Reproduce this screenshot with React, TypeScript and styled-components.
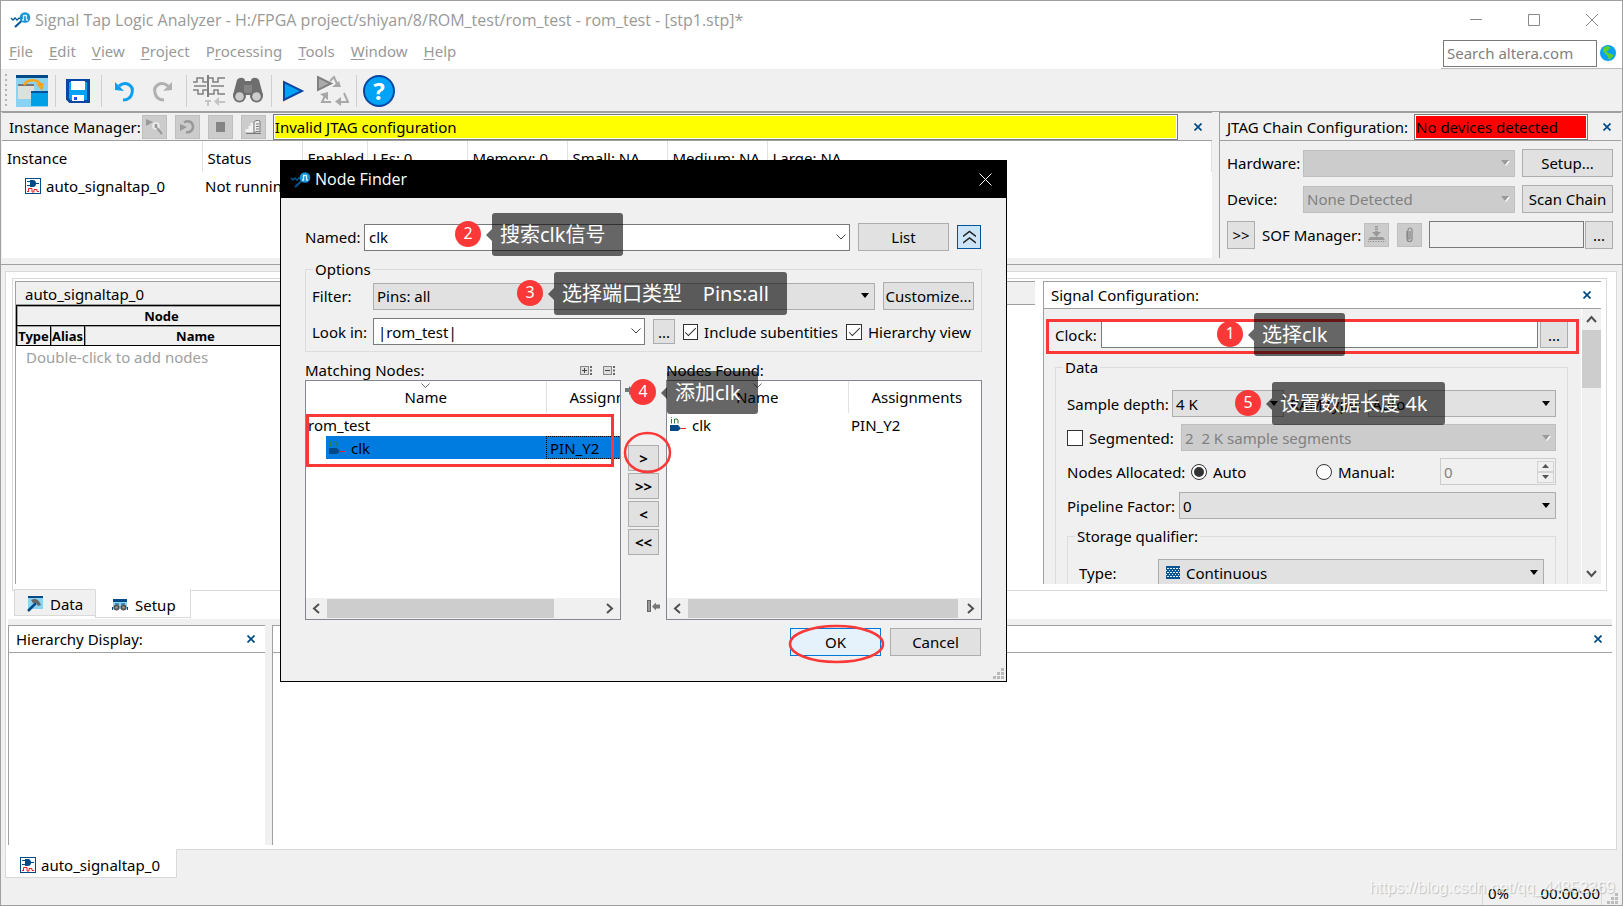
import React from "react";
import styled, { createGlobalStyle, css } from "styled-components";

const GlobalStyle = createGlobalStyle`
  *, *::before, *::after { box-sizing: border-box; }
  body { margin: 0; background: #a0a0a0; }
  body, button, input, select, table {
    font-family: "Noto Sans", "Noto Sans CJK SC", sans-serif;
    font-size: 15px;
    line-height: 20px;
    color: #000;
  }
  button, input, select { margin: 0; border-radius: 0; }
  svg { display: block; flex: none; }
`;

const FACE = "#f0f0f0";
const LINE = "#a0a0a0";
const SOFT = "#d9d9d9";

/* ---------- window frame ---------- */

const Frame = styled.div`
  position: relative;
  display: flex;
  flex-direction: column;
  min-height: 100vh;
  background: ${FACE};
  border: 1px solid ${LINE};
  overflow: hidden;
`;

const Heading = styled.header`
  display: flex;
  flex-direction: column;
  background: #fff;
  border-bottom: 1px solid #ececec;
`;

const TitleBar = styled.div`
  display: flex;
  align-items: center;
  height: 37px;
  padding: 0 18px 0 9px;
  gap: 3px;
`;

const WindowTitle = styled.h1`
  flex: 1;
  margin: 0;
  font-family: "Open Sans", sans-serif;
  font-size: 16px;
  font-weight: 400;
  line-height: 24px;
  white-space: nowrap;
  color: #999;
`;

const CaptionButtons = styled.div`
  display: flex;
  gap: 34px;
`;

const GlyphButton = styled.button`
  display: flex;
  align-items: center;
  justify-content: center;
  width: 24px;
  height: 24px;
  padding: 0;
  border: 0;
  background: none;
`;

const MenuRow = styled.div`
  display: flex;
  justify-content: space-between;
  height: 31px;
  padding-left: 8px;
`;

const Menu = styled.nav`
  display: flex;
  gap: 16px;
  height: 26px;
  align-items: center;
  a { color: #999; text-decoration: none; }
  u { text-underline-offset: 2px; }
`;

const SearchBox = styled.div`
  display: flex;
  align-items: center;
  gap: 3px;
  padding: 0 6px 0 2px;
  border-bottom: 1px solid #bdbdbd;
`;

const TextField = styled.input<{ $grow?: boolean; $w?: number }>`
  height: 27px;
  padding: 0 3px;
  border: 1px solid #7a7a7a;
  background: #fff;
  outline: 0;
  min-width: 0;
  ${(p) => p.$grow && css`flex: 1;`}
  ${(p) => p.$w && css`width: ${p.$w}px;`}
  &::placeholder { color: #808080; opacity: 1; }
  &:disabled { background: ${FACE}; }
`;

const Toolbar = styled.div`
  display: flex;
  align-items: center;
  height: 41px;
  margin-top: 1px;
  padding-left: 4px;
  border-bottom: 1px solid ${LINE};
`;

const Grip = styled.span`
  width: 2px;
  height: 34px;
  margin-right: 9px;
  background: repeating-linear-gradient(#b4b4b4 0 2px, transparent 2px 5px);
`;

const Tool = styled.button`
  width: 32px;
  height: 32px;
  padding: 0;
  border: 0;
  background: none;
  & + & { margin-left: 7px; }
`;

const Divider = styled.span`
  width: 1px;
  height: 32px;
  margin: 0 6px 0 7px;
  background: #cfcfcf;
`;

/* ---------- shared controls ---------- */

const PanelHeader = styled.div<{ $white?: boolean; $tall?: boolean }>`
  display: flex;
  align-items: center;
  height: ${(p) => (p.$tall ? 29 : 28)}px;
  padding: 0 2px 0 7px;
  border: solid ${LINE};
  border-width: 1px 0;
  background: ${(p) => (p.$white ? "#fff" : FACE)};
  white-space: nowrap;
`;

const PanelTitle = styled.span`
  margin-right: auto;
`;

const HeaderLabel = styled.span<{ $gap: number }>`
  margin-right: ${(p) => p.$gap}px;
`;

const Message = styled.output<{ $fill: string; $w?: number }>`
  ${(p) => (p.$w ? css`width: ${p.$w}px;` : css`flex: 1;`)}
  height: 26px;
  padding: 2px 0 0 1px;
  border: 1px solid #7a7a7a;
  background: ${(p) => p.$fill};
  box-shadow: inset 0 0 0 1px #fff;
`;

const MiniButton = styled.button`
  display: flex;
  align-items: center;
  justify-content: center;
  width: 25px;
  height: 24px;
  padding: 0;
  border: 1px solid #bfbfbf;
  background: #ccc;
`;

const MiniGroup = styled.div`
  display: flex;
  gap: 8px;
  margin-right: 7px;
`;

const Button = styled.button<{ $w?: number; $h?: number; $primary?: boolean }>`
  flex: none;
  display: flex;
  align-items: center;
  justify-content: center;
  width: ${(p) => p.$w ?? 91}px;
  height: ${(p) => p.$h ?? 28}px;
  padding: 0;
  border: 1px solid ${(p) => (p.$primary ? "#0078d7" : "#adadad")};
  background: ${(p) => (p.$primary ? "#e5f1fb" : "#e1e1e1")};
  white-space: nowrap;
`;

const SelectWrap = styled.span<{ $w?: number }>`
  display: grid;
  align-items: center;
  min-width: 0;
  ${(p) => (p.$w ? css`width: ${p.$w}px;` : css`flex: 1;`)}
  > * { grid-area: 1 / 1; }
  > svg { justify-self: end; margin-right: 5px; pointer-events: none; }
`;

const NativeSelect = styled.select<{ $pad?: number }>`
  appearance: none;
  width: 100%;
  height: 27px;
  padding: 0 20px 0 ${(p) => p.$pad ?? 3}px;
  border: 1px solid #adadad;
  background: #e1e1e1;
  opacity: 1;
  &:disabled { border-color: #bfbfbf; background: #ccc; color: #808080; }
`;

const LeadIcon = styled.span`
  margin-left: 8px;
  pointer-events: none;
`;

function Select(p: { id: string; value: string; w?: number; pad?: number; disabled?: boolean; icon?: React.ReactNode }) {
  return (
    <SelectWrap $w={p.w}>
      <NativeSelect id={p.id} disabled={p.disabled} $pad={p.pad} defaultValue={p.value}>
        <option>{p.value}</option>
      </NativeSelect>
      {p.icon && <LeadIcon>{p.icon}</LeadIcon>}
      <svg width="9" height="6" viewBox="0 0 9 6">
        {p.disabled && <path d="M1 1h8L5 6z" fill="#fff" />}
        <path d="M0 0h8L4 5z" fill={p.disabled ? "#999" : "#000"} />
      </svg>
    </SelectWrap>
  );
}

const ComboShell = styled.div<{ $w?: number }>`
  display: flex;
  ${(p) => (p.$w ? css`width: ${p.$w}px;` : css`flex: 1;`)}
  height: 27px;
  border: 1px solid #7a7a7a;
  background: #fff;
  input { flex: 1; min-width: 0; border: 0; outline: 0; padding: 0 4px; background: none; }
  button { width: 17px; }
`;

function Combo({ id, value, w }: { id: string; value: string; w?: number }) {
  return (
    <ComboShell $w={w}>
      <input id={id} defaultValue={value} />
      <GlyphButton type="button" aria-label="Open list">
        <svg width="10" height="6" viewBox="0 0 10 6"><path d="M.5.5 5 5 9.500.5" fill="none" stroke="#444" /></svg>
      </GlyphButton>
    </ComboShell>
  );
}

const CheckLabel = styled.label<{ $w?: number }>`
  display: flex;
  align-items: center;
  gap: 6px;
  ${(p) => p.$w && css`width: ${p.$w}px;`}
  white-space: nowrap;
`;

const Check = styled.input`
  appearance: none;
  display: grid;
  place-items: center;
  width: 16px;
  height: 16px;
  border: 1px solid #333;
  background: #fff;
  &:checked::after {
    content: "";
    width: 11px;
    height: 5px;
    margin-top: -3px;
    border: solid #333;
    border-width: 0 0 1px 1px;
    transform: rotate(-45deg);
  }
`;

const Radio = styled(Check)`
  border-radius: 50%;
  &:checked::after {
    width: 10px;
    height: 10px;
    margin: 0;
    border: 0;
    border-radius: 50%;
    background: #333;
  }
`;

const Group = styled.fieldset<{ $pad: string; $gap: number; $legend?: number }>`
  min-width: 0;
  margin: 0;
  padding: ${(p) => p.$pad};
  border: 1px solid #dcdcdc;
  legend { height: 20px; margin-left: ${(p) => p.$legend ?? -4}px; padding: 0 2px; }
  > div + div { margin-top: ${(p) => p.$gap}px; }
`;

const Row = styled.div<{ $gap: number }>`
  display: flex;
  align-items: center;
  gap: ${(p) => p.$gap}px;
`;

const FieldLabel = styled.label<{ $w?: number }>`
  flex: none;
  ${(p) => p.$w && css`width: ${p.$w}px;`}
  white-space: nowrap;
`;

function CloseGlyph() {
  return (
    <GlyphButton type="button" aria-label="Close">
      <svg width="8" height="8" viewBox="0 0 8 8"><path d="M.5.5l7 7M7.500.5l-7 7" stroke="#004b87" strokeWidth="1.700" /></svg>
    </GlyphButton>
  );
}

/* ---------- upper docks ---------- */

const UpperDocks = styled.div`
  display: grid;
  grid-template-columns: 1fr 402px;
  column-gap: 7px;
  padding: 0 1px 6px;
  border-bottom: 1px solid ${LINE};
`;

const InstanceDock = styled.section`
  min-width: 0;
  background: #fff;
  height: 146px;
`;

const InstanceTable = styled.table`
  width: 100%;
  table-layout: fixed;
  border-collapse: collapse;
  white-space: nowrap;
  th {
    height: 31px;
    padding: 2px 0 0 5px;
    border-right: 1px solid #e2e2e2;
    font-weight: 400;
    text-align: left;
  }
  td { height: 27px; padding: 0 0 0 3px; }
`;

const InstanceCell = styled.span`
  display: flex;
  align-items: center;
  gap: 5px;
  padding-left: 20px;
`;

const InstanceClose = styled.span`
  margin-left: 8px;
`;

const JtagDock = styled.section`
  border-left: 1px solid ${LINE};
`;

const JtagClose = styled.span`
  margin-left: auto;
`;

const JtagBody = styled.div`
  display: flex;
  flex-direction: column;
  gap: 8px;
  padding: 8px 8px 0 7px;
`;

const SofPath = styled.div`
  flex: 1;
  display: flex;
  gap: 1px;
  min-width: 0;
  margin-left: -7px;
`;

/* ---------- workspace ---------- */

const Workspace = styled.main`
  flex: 1;
  display: flex;
  flex-direction: column;
  margin: 6px 5px 0 4px;
  padding: 6px 4px 4px 2px;
  border: 1px solid ${SOFT};
  background: #fff;
`;

const SetupPane = styled.section`
  display: grid;
  grid-template-columns: 1fr 558px;
  column-gap: 8px;
  height: 313px;
  margin: 0 5px 0 4px;
  padding: 2px 5px 6px 2px;
  border: 1px solid ${SOFT};
`;

const Editor = styled.div`
  border: solid ${LINE};
  border-width: 1px 0 0 1px;
`;

const EditorTitle = styled.div`
  height: 23px;
  padding: 2px 0 0 9px;
  border-bottom: 1px solid ${LINE};
  background: ${FACE};
`;

const NodeTable = styled.table`
  width: 291px;
  border-collapse: collapse;
  table-layout: fixed;
  th {
    height: 20px;
    padding: 2px 0 0;
    border: 1px solid #000;
    background: ${FACE};
    box-shadow: inset 1px 1px 0 #a0a0a0;
    line-height: 17px;
    font-size: 13px;
    font-weight: 700;
  }
`;

const Hint = styled.p`
  margin: 1px 0 0 10px;
  color: #a0a0a0;
`;

const ConfigDock = styled.section`
  position: relative;
  display: flex;
  flex-direction: column;
  min-height: 0;
  border-left: 1px solid ${LINE};
`;

const ConfigScroll = styled.div`
  flex: 1;
  min-height: 0;
  display: flex;
  background: ${FACE};
`;

const ConfigBody = styled.div`
  flex: 1;
  overflow: hidden;
  padding: 12px 13px 0 11px;
`;

const ConfigGroupGap = styled.div`
  margin-top: 9px;
`;

const VScroll = styled.div`
  display: flex;
  flex-direction: column;
  align-items: center;
  width: 20px;
  border-left: 1px solid #fff;
  > span { width: 19px; height: 58px; margin-bottom: auto; background: #cdcdcd; }
  button { width: 20px; height: 21px; }
`;

const Spin = styled.div`
  display: flex;
  align-items: center;
  width: 116px;
  height: 27px;
  margin-left: auto;
  border: 1px solid #ccc;
  input { flex: 1; min-width: 0; padding: 0 3px; border: 0; background: none; color: #808080; }
`;

const SpinButtons = styled.span`
  display: flex;
  flex-direction: column;
  margin-right: 1px;
  button { width: 17px; height: 11px; border: 1px solid #d4d4d4; }
`;

const PaneTabs = styled.div`
  display: flex;
  align-items: flex-start;
  margin: -2px 0 0 6px;
  height: 30px;
`;

const PaneTab = styled.button<{ $active?: boolean }>`
  display: flex;
  align-items: center;
  gap: 7px;
  width: ${(p) => (p.$active ? 96 : 82)}px;
  height: ${(p) => (p.$active ? 29 : 27)}px;
  padding: 2px 0 0 ${(p) => (p.$active ? 16 : 12)}px;
  border: 1px solid ${SOFT};
  border-top-color: ${(p) => (p.$active ? "#fff" : SOFT)};
  margin-right: -1px;
  background: ${(p) => (p.$active ? "#fff" : FACE)};
`;

const LowerDocks = styled.div`
  flex: 1;
  display: grid;
  grid-template-columns: 257px 1fr;
  border-top: 6px solid ${FACE};
`;

const LowerDock = styled.section`
  border-left: 1px solid ${LINE};
  & + & { box-shadow: -7px 0 0 ${FACE}; margin-left: 7px; }
`;

const FileTabs = styled.div`
  display: flex;
  margin: -1px 0 0 4px;
`;

const FileTab = styled.button`
  display: flex;
  align-items: center;
  gap: 5px;
  width: 172px;
  height: 29px;
  padding: 2px 0 0 14px;
  border: 1px solid ${SOFT};
  border-top-color: #fff;
  background: #fff;
`;

const StatusBar = styled.footer`
  display: flex;
  justify-content: flex-end;
  align-items: flex-end;
  height: 27px;
  padding-right: 4px;
`;

const StatusCells = styled.div`
  display: flex;
  width: 120px;
  height: 22px;
  justify-content: space-between;
  margin-right: 5px;
  padding: 0 1px 0 5px;
  border: solid #d9d9d9;
  border-width: 0 1px;
`;

const StatusGrip = styled.div`
  padding-bottom: 1px;
`;

const Watermark = styled.span`
  position: absolute;
  right: 7px;
  bottom: 5px;
  font-family: "Liberation Sans", Arial, sans-serif;
  font-size: 16px;
  line-height: 24px;
  color: rgba(255, 255, 255, 0.75);
  text-shadow: 1px 1px 1px rgba(0, 0, 0, 0.2);
`;

/* ---------- node finder dialog ---------- */

const Dialog = styled.div`
  position: absolute;
  left: 279px;
  top: 159px;
  width: 727px;
  border: 1px solid #000;
  background: ${FACE};
`;

const DialogTitle = styled.div`
  display: flex;
  align-items: center;
  gap: 3px;
  height: 37px;
  padding: 0 9px;
  background: #000;
  h2 {
    flex: 1;
    margin: 0;
    padding-bottom: 1px;
    font-family: "Open Sans", sans-serif;
    font-size: 16px;
    font-weight: 400;
    color: #fff;
  }
`;

const DialogBody = styled.form`
  display: flex;
  flex-direction: column;
  gap: 8px;
  padding: 25px 24px 25px 24px;
`;

const NamedRow = styled(Row)`
  padding-right: 1px;
`;

const ToggleButton = styled.button`
  display: flex;
  align-items: center;
  justify-content: center;
  width: 24px;
  height: 24px;
  padding: 0;
  border: 1px solid #005499;
  background: #cce4f7;
`;

const Lists = styled.div`
  display: grid;
  grid-template-columns: 316px 45px 1fr;
`;

const ListColumn = styled.div`
  display: flex;
  flex-direction: column;
  min-width: 0;
`;

const ListCaption = styled.div`
  display: flex;
  align-items: center;
  gap: 11px;
  height: 20px;
  padding-right: 6px;
  > span { flex: 1; }
`;

const ListBox = styled.div`
  display: flex;
  flex-direction: column;
  height: 240px;
  border: 1px solid #828790;
  background: #fff;
  overflow: hidden;
`;

const ListArea = styled.div`
  flex: 1;
  overflow: hidden;
`;

const NodesTable = styled.table<{ $name: number }>`
  width: ${(p) => p.$name + 137}px;
  table-layout: fixed;
  border-collapse: collapse;
  th {
    height: 32px;
    padding: 0;
    font-weight: 400;
    vertical-align: top;
  }
  th > svg { margin: 2px auto 0; }
  th > span { display: block; margin-top: -1px; }
  th:last-child > span { margin-top: 6px; }
  th:first-child { width: ${(p) => p.$name}px; border-right: 1px solid #e2e2e2; }
  td { height: 23px; padding: 0 0 0 2px; }
`;

const NodeCell = styled.span<{ $selected?: boolean; $indent?: number }>`
  display: flex;
  align-items: center;
  gap: 6px;
  height: 23px;
  margin-left: ${(p) => p.$indent ?? 0}px;
  padding: 0 3px;
  background: ${(p) => (p.$selected ? "#007be0" : "none")};
  svg { margin-top: -2px; }
`;

const PinCell = styled.span<{ $selected?: boolean }>`
  display: flex;
  align-items: center;
  height: 23px;
  margin-left: -2px;
  padding-left: 3px;
  ${(p) => p.$selected && css`background: #007be0; border: 1px dotted #000;`}
`;

const HScroll = styled.div<{ $thumb: number }>`
  display: flex;
  align-items: center;
  height: 21px;
  padding-bottom: 1px;
  background: ${FACE};
  > span { width: ${(p) => p.$thumb}px; height: 19px; margin-right: auto; background: #cdcdcd; }
  button { width: 21px; }
`;

const Transfer = styled.div`
  display: flex;
  flex-direction: column;
  align-items: center;
  gap: 2px;
  padding: 24px 0 8px;
  button { font-weight: 700; }
  > svg:first-child { align-self: flex-start; margin: 0 0 47px 4px; }
  > svg:last-child { align-self: flex-end; margin: auto 6px 0 0; }
`;

const DialogActions = styled.div`
  display: flex;
  justify-content: flex-end;
  gap: 9px;
  padding-right: 1px;
`;

const DialogGrip = styled.div`
  position: absolute;
  right: 2px;
  bottom: 2px;
`;

/* ---------- annotations ---------- */

const Ring = styled.svg<{ $x: number; $y: number }>`
  position: absolute;
  left: ${(p) => p.$x}px;
  top: ${(p) => p.$y}px;
  pointer-events: none;
`;

const RedFrame = styled.div<{ $x: number; $y: number; $w: number; $h: number }>`
  position: absolute;
  left: ${(p) => p.$x}px;
  top: ${(p) => p.$y}px;
  width: ${(p) => p.$w}px;
  height: ${(p) => p.$h}px;
  border: 3px solid #fb3838;
  pointer-events: none;
`;

const Note = styled.div<{ $x: number; $y: number }>`
  position: absolute;
  left: ${(p) => p.$x}px;
  top: ${(p) => p.$y}px;
  display: flex;
  align-items: center;
  color: #fff;
  white-space: pre;
`;

const NoteNumber = styled.span`
  width: 26px;
  height: 26px;
  margin: 0 5px 1px 0;
  border-radius: 50%;
  background: #fb3838;
  font-size: 16px;
  line-height: 24px;
  text-align: center;
`;

const NoteArrow = styled.span`
  border: solid transparent;
  border-width: 6px 6px 6px 0;
  border-right-color: rgba(0, 0, 0, 0.6);
`;

const NoteText = styled.span`
  height: 43px;
  padding: 0 18px 0 8px;
  border-radius: 3px;
  background: rgba(0, 0, 0, 0.6);
  font-size: 20px;
  line-height: 44px;
`;

function Callout({ x, y, n, text }: { x: number; y: number; n: number; text: string }) {
  return (
    <Note $x={x} $y={y}>
      <NoteNumber>{n}</NoteNumber>
      <NoteArrow />
      <NoteText>{text}</NoteText>
    </Note>
  );
}

/* ---------- icons ---------- */

function TapIcon() {
  return (
    <svg width="22" height="16" viewBox="0 0 22 16">
      <path d="M1 6l2 2 2-2 2 2 2-2 2 1" fill="none" stroke="#005a94" strokeWidth="1.300" />
      <path d="M11.500 9 5 15" stroke="#00568f" strokeWidth="2" />
      <circle cx="15" cy="5.500" r="5.300" fill="#1193d6" />
      <path d="M12 8h1.500V3.500h3V8H18" fill="none" stroke="#c8f0ff" strokeWidth="1.300" />
    </svg>
  );
}

function InstanceIcon() {
  return (
    <svg width="16" height="16" viewBox="0 0 16 16">
      <rect x=".5" y=".5" width="15" height="15" fill="#fff" stroke="#004b87" />
      <path d="M5 2h3c2 0 3 1.500 3 3.500S10 9 8 9H5z" fill="#004b87" />
      <path d="M2 3.500h3M2 7.500h3M11 5.500h3" stroke="#004b87" />
      <path d="M2 13.500h1.500M3.500 14v-3.500h3.500v3.500h2v-2.500h3v2H14" fill="none" stroke="#ee1c25" />
    </svg>
  );
}

function PinIcon() {
  return (
    <svg width="16" height="16" viewBox="0 0 16 16">
      <path d="M1.500 3v4.500M1.500 1v.8M4.500 7.500V3h2.500l1 1v3.500" fill="none" stroke="#2f7d32" />
      <path d="M0 9h8l3 3.500L8 15H0z" fill="#004b87" />
      <path d="M11 12.500h5" stroke="#ee1c25" />
    </svg>
  );
}

function SizeGrip() {
  const dots = [[8, 0], [4, 4], [8, 4], [0, 8], [4, 8], [8, 8]];
  return (
    <svg width="11" height="11" viewBox="0 0 11 11">
      {dots.map(([x, y]) => <rect key={`${x}-${y}`} x={x} y={y} width="3" height="3" fill="#bbb" />)}
    </svg>
  );
}

function Chevron({ dir }: { dir: "left" | "right" | "up" | "down" }) {
  const d = { left: "M8 1 3 5.500 8 10", right: "M3 1l5 4.500L3 10", up: "M1 8l4.500-5L10 8", down: "M1 3l4.500 5L10 3" }[dir];
  return <svg width="11" height="11" viewBox="0 0 11 11"><path d={d} fill="none" stroke="#505050" strokeWidth="2" /></svg>;
}

function SortMark() {
  return <svg width="9" height="5" viewBox="0 0 9 5"><path d="M.5.5l4 4 4-4" fill="none" stroke="#666" /></svg>;
}

function TreeMark({ plus }: { plus?: boolean }) {
  return (
    <svg width="12" height="9" viewBox="0 0 12 9">
      <rect x=".5" y=".5" width="8" height="8" fill="#ddd" stroke="#888" />
      <path d={plus ? "M2 4.500h5M4.500 2v5" : "M2 4.500h5"} stroke="#444" />
      <path d="M11 0v9" stroke="#666" strokeWidth="2" strokeDasharray="2 1.500" />
    </svg>
  );
}

function Triangle({ up }: { up?: boolean }) {
  return <svg width="7" height="4" viewBox="0 0 7 4"><path d={up ? "M0 4h7L3.500 0z" : "M0 0h7L3.500 4z"} fill="#555" /></svg>;
}

const toolSvg = { width: 32, height: 32, viewBox: "0 0 32 32" };

function OpenViewIcon() {
  return (
    <svg {...toolSvg}>
      <path d="M0 0h32v32H0z" fill="#8bd2f3" />
      <path d="M0 0h32v3H0z" fill="#004b87" />
      <path d="M2 10h16v14H2z" fill="#e0e0da" /><path d="M2 9h16v2H2z" fill="#777" />
      <path d="M15 17h17v14H15z" fill="#00a0e6" /><path d="M15 16h17v2H15z" fill="#00529b" />
      <path d="M8 10c3-6 15-7 17 1" fill="none" stroke="#f9a51a" strokeWidth="2.500" />
      <path d="M20 8.500l8-.500-2 8z" fill="#f9a51a" />
    </svg>
  );
}

function SaveIcon() {
  return (
    <svg {...toolSvg}>
      <path d="M5.500 5.500h21v21H8l-2.500-2.500z" fill="#00a3f5" stroke="#0a46a4" strokeWidth="3" />
      <path d="M9 6h14v9H9z" fill="#fff" />
      <path d="M10 20h12v6H10z" fill="#fff" /><path d="M12 22h3v3h-3z" fill="#2251e8" />
    </svg>
  );
}

function UndoIcon({ redo }: { redo?: boolean }) {
  const color = redo ? "#b0b0b0" : "#0aa0f0";
  return (
    <svg {...toolSvg}>
      <g transform={redo ? "translate(32 0) scale(-1 1)" : undefined}>
        <path d="M11 11c7-6 15 0 13 7-1 5-5 7-9 7" fill="none" stroke={color} strokeWidth="3" />
        <path d="M7 7v8l9 1z" fill={color} />
      </g>
    </svg>
  );
}

function WavesIcon() {
  return (
    <svg {...toolSvg}>
      <path d="M0 7h4V3h6v4h5V3h5v4h5V3h7M0 15h5v4h5v-4h5v4h6v-4h4v4h7M1 11h12m5 0h13" fill="none" stroke="#808080" strokeWidth="1.500" />
      <path d="M15 0v22" stroke="#808080" strokeWidth="2" />
      <path d="M12 26h6M15 26v5M24 27h8" stroke="#c4c4c4" strokeWidth="2" /><path d="M26 22v9l-5-4.500z" fill="#c4c4c4" />
    </svg>
  );
}

function BinocularIcon() {
  return (
    <svg {...toolSvg}>
      <path d="M5 5c2-3 8-3 8 1h6c0-4 6-4 8-1l4 15H1z" fill="#6e6e6e" />
      <path d="M12 10h8v8h-8z" fill="#858585" />
      <circle cx="7.500" cy="21" r="6.500" fill="#6e6e6e" /><circle cx="24.500" cy="21" r="6.500" fill="#6e6e6e" />
      <circle cx="7.500" cy="21.500" r="4.300" fill="#ccc" /><circle cx="24.500" cy="21.500" r="4.300" fill="#ccc" />
    </svg>
  );
}

function PlayIcon() {
  return <svg {...toolSvg}><path d="M6 7v18l18-9z" fill="#00a3f5" stroke="#0a46a4" strokeWidth="2" /></svg>;
}

function RecycleIcon() {
  return (
    <svg {...toolSvg}>
      <path d="M1 2v13l13-6.500z" fill="#aaa" stroke="#808080" strokeWidth="2" />
      <path d="M13 6l4-4 4 9M14 27H5l3-6M27 18l4 9H21" fill="none" stroke="#a8a8a8" strokeWidth="2" />
      <path d="M15 12h9l-2-6zM3 19l8-2v8zM24 22v9l-6-4.500z" fill="#a8a8a8" />
    </svg>
  );
}

const HelpBadge = styled.span`
  display: block;
  width: 32px;
  height: 32px;
  border: 2px solid #0a46a4;
  border-radius: 50%;
  background: #00a3f5;
  color: #fff;
  font-size: 24px;
  font-weight: 700;
  line-height: 28px;
  text-align: center;
`;

function GlobeIcon() {
  return (
    <svg width="16" height="16" viewBox="0 0 16 16">
      <circle cx="8" cy="8" r="8" fill="#0aa0f5" />
      <path d="M4 2l4-1 3 2-2 1-1 2-2 0 2 2 4 1 2 2-3 2-1 2-2-2 0-2-3-2-2-3z" fill="#5ed02b" />
    </svg>
  );
}

function HammerIcon() {
  return (
    <svg width="16" height="16" viewBox="0 0 16 16">
      <path d="M1 0h15v13H1z" fill="#8bd2f3" /><path d="M1 0h15v2H1z" fill="#004b87" />
      <path d="M1 15l8-8" stroke="#004b87" strokeWidth="2.500" />
      <path d="M4 4c4-2 7-1 9 3l1 2-3 1-2-3H6z" fill="#666" />
    </svg>
  );
}

function GogglesIcon() {
  return (
    <svg width="16" height="12" viewBox="0 0 16 12">
      <path d="M1 0h14v10H1z" fill="#8bd2f3" /><path d="M1 0h14v3H1z" fill="#004b87" />
      <path d="M3 5h4m2 0h4" stroke="#004b87" />
      <circle cx="4.500" cy="8.500" r="3" fill="#555" /><circle cx="11.500" cy="8.500" r="3" fill="#555" />
      <circle cx="4.500" cy="8.500" r="1.300" fill="#999" /><circle cx="11.500" cy="8.500" r="1.300" fill="#999" />
      <path d="M.5 11V8M15.500 11V8" stroke="#004b87" />
    </svg>
  );
}

function ContinuousIcon() {
  return (
    <svg width="14" height="13" viewBox="0 0 14 13">
      <path d="M0 0h14v13H0z" fill="#0b5494" />
      <path d="M1 2.500h13M1 6.500h13M1 10.500h13" stroke="#e1f0fa" strokeDasharray="2 1" />
      <path d="M0 4.500h14M0 8.500h14" stroke="#e1f0fa" strokeDasharray="1 2" />
    </svg>
  );
}

function StepIcon({ flip }: { flip?: boolean }) {
  return (
    <svg width="13" height="12" viewBox="0 0 13 12">
      {flip && <rect x=".5" y=".5" width="3" height="11" fill="#999" stroke="#666" />}
      <path d={flip ? "M5 6.500l4-4v2h4v4H9v2z" : "M0 4h4V2l5 4.500L4 11V8H0z"} fill="#777" />
    </svg>
  );
}

const miniSvg = { width: 19, height: 18, viewBox: "0 0 19 18" };
const miniIcons = [
  <svg {...miniSvg}><path d="M1 1v7l7-4z" fill="#999" /><circle cx="11" cy="8" r="3" fill="none" stroke="#eee" strokeWidth="1.500" /><path d="M11 6v4M12 10l5 6" stroke="#999" strokeWidth="2" /></svg>,
  <svg {...miniSvg}><path d="M6 4.500a5.500 5.500 0 1 1 2 9.500" fill="none" stroke="#999" strokeWidth="2.500" /><path d="M2 6v7l7-4z" fill="#999" /></svg>,
  <svg {...miniSvg}><path d="M5 4h9v10H5z" fill="#858585" /></svg>,
  <svg {...miniSvg}><path d="M1.500 11h3V8h2V5h3v9h-8z" fill="#f2f2f2" /><path d="M10 4c2-2 4-2 6-1v11c-2-1-4-1-6 1z" fill="#eee" stroke="#777" /><path d="M2 15.500h15M12 6h3M12 8.500h3M12 11h3" stroke="#777" /></svg>,
];

const menuItems = ["File", "Edit", "View", "Project", "Processing", "Tools", "Window", "Help"];

const instanceColumns: [string, number | undefined][] = [
  ["Instance", 200], ["Status", 100], ["Enabled", 65], ["LEs: 0", 100], ["Memory: 0", 100], ["Small: NA", 100], ["Medium: NA", 100], ["Large: NA", undefined],
];

/* ---------- sections ---------- */

function ScrollBar({ thumb }: { thumb: number }) {
  return (
    <HScroll $thumb={thumb}>
      <GlyphButton type="button" aria-label="Scroll left"><Chevron dir="left" /></GlyphButton>
      <span />
      <GlyphButton type="button" aria-label="Scroll right"><Chevron dir="right" /></GlyphButton>
    </HScroll>
  );
}

function NodesHead() {
  return <thead><tr><th><SortMark /><span>Name</span></th><th><span>Assignments</span></th></tr></thead>;
}

function NodeFinder() {
  return (
    <Dialog role="dialog" aria-label="Node Finder">
      <DialogTitle>
        <TapIcon />
        <h2>Node Finder</h2>
        <GlyphButton type="button" aria-label="Close dialog">
          <svg width="13" height="13" viewBox="0 0 13 13"><path d="M.5.5l12 12M12.500.5l-12 12" stroke="#fff" /></svg>
        </GlyphButton>
      </DialogTitle>
      <DialogBody onSubmit={(e) => e.preventDefault()}>
        <NamedRow $gap={8}>
          <FieldLabel htmlFor="named" $w={51}>Named:</FieldLabel>
          <Combo id="named" value="clk" />
          <Button type="button">List</Button>
          <ToggleButton type="button" aria-label="Collapse options">
            <svg width="13" height="14" viewBox="0 0 13 14"><path d="M0 6.500l6.500-5 6.500 5M0 13l6.500-5 6.500 5" fill="none" stroke="#222" strokeWidth="1.500" /></svg>
          </ToggleButton>
        </NamedRow>
        <Group $pad="3px 7px 6px 6px" $gap={8} $legend={1}>
          <legend>Options</legend>
          <Row $gap={8}>
            <FieldLabel htmlFor="filter" $w={53}>Filter:</FieldLabel>
            <Select id="filter" value="Pins: all" />
            <Button type="button">Customize...</Button>
          </Row>
          <Row $gap={8}>
            <FieldLabel htmlFor="lookin" $w={53}>Look in:</FieldLabel>
            <Combo id="lookin" value="|rom_test|" w={272} />
            <Button type="button" $w={22} $h={25}>...</Button>
            <CheckLabel $w={155}><Check type="checkbox" defaultChecked /><span>Include subentities</span></CheckLabel>
            <CheckLabel><Check type="checkbox" defaultChecked /><span>Hierarchy view</span></CheckLabel>
          </Row>
        </Group>
        <Lists>
          <ListColumn>
            <ListCaption><span>Matching Nodes:</span><TreeMark plus /><TreeMark /></ListCaption>
            <ListBox>
              <ListArea>
                <NodesTable $name={240}>
                  <NodesHead />
                  <tbody>
                    <tr><td>rom_test</td><td /></tr>
                    <tr>
                      <td><NodeCell $selected $indent={18}><PinIcon />clk</NodeCell></td>
                      <td><PinCell $selected>PIN_Y2</PinCell></td>
                    </tr>
                  </tbody>
                </NodesTable>
              </ListArea>
              <ScrollBar thumb={227} />
            </ListBox>
          </ListColumn>
          <Transfer>
            <StepIcon />
            {[">", ">>", "<", "<<"].map((t) => <Button type="button" key={t} $w={31} $h={26}>{t}</Button>)}
            <StepIcon flip />
          </Transfer>
          <ListColumn>
            <ListCaption><span>Nodes Found:</span></ListCaption>
            <ListBox>
              <ListArea>
                <NodesTable $name={181}>
                  <NodesHead />
                  <tbody>
                    <tr>
                      <td><NodeCell $indent={-2}><PinIcon />clk</NodeCell></td>
                      <td><PinCell>PIN_Y2</PinCell></td>
                    </tr>
                  </tbody>
                </NodesTable>
              </ListArea>
              <ScrollBar thumb={270} />
            </ListBox>
          </ListColumn>
        </Lists>
        <DialogActions>
          <Button type="submit" $primary>OK</Button>
          <Button type="button">Cancel</Button>
        </DialogActions>
      </DialogBody>
      <DialogGrip><SizeGrip /></DialogGrip>
      <RedFrame $x={25} $y={253} $w={308} $h={53} />
      <Ring $x={342} $y={270} width="49" height="43"><ellipse cx="24.500" cy="21.500" rx="22.500" ry="19.500" fill="none" stroke="#fb3838" strokeWidth="2.500" /></Ring>
      <Ring $x={507} $y={463} width="97" height="40"><ellipse cx="48.500" cy="20" rx="46.500" ry="18" fill="none" stroke="#fb3838" strokeWidth="2.500" /></Ring>
      <Callout x={174} y={52} n={2} text="搜索clk信号" />
      <Callout x={236} y={111} n={3} text="选择端口类型    Pins:all" />
      <Callout x={349} y={210} n={4} text="添加clk" />
    </Dialog>
  );
}

function SignalConfiguration() {
  return (
    <ConfigDock>
      <PanelHeader $white><PanelTitle>Signal Configuration:</PanelTitle><CloseGlyph /></PanelHeader>
      <ConfigScroll>
        <ConfigBody>
          <Row $gap={2}>
            <FieldLabel htmlFor="clock" $w={44}>Clock:</FieldLabel>
            <TextField id="clock" $grow />
            <Button $w={28} $h={27}>...</Button>
          </Row>
          <ConfigGroupGap>
            <Group $pad="13px 11px 0" $gap={7}>
              <legend>Data</legend>
              <Row $gap={6}>
                <FieldLabel htmlFor="depth" $w={99}>Sample depth:</FieldLabel>
                <Select id="depth" value="4 K" w={112} />
                <FieldLabel htmlFor="ram" $w={72}>RAM type:</FieldLabel>
                <Select id="ram" value="Auto" />
              </Row>
              <Row $gap={6}>
                <CheckLabel $w={108}><Check type="checkbox" /><span>Segmented:</span></CheckLabel>
                <Select id="segments" value={"2\u00a0\u00a02 K sample segments"} disabled />
              </Row>
              <Row $gap={6}>
                <FieldLabel as="span" $w={118}>Nodes Allocated:</FieldLabel>
                <CheckLabel $w={119}><Radio type="radio" name="alloc" defaultChecked /><span>Auto</span></CheckLabel>
                <CheckLabel><Radio type="radio" name="alloc" /><span>Manual:</span></CheckLabel>
                <Spin>
                  <input aria-label="Manual nodes" defaultValue="0" disabled />
                  <SpinButtons>
                    <GlyphButton aria-label="Increase"><Triangle up /></GlyphButton>
                    <GlyphButton aria-label="Decrease"><Triangle /></GlyphButton>
                  </SpinButtons>
                </Spin>
              </Row>
              <Row $gap={6}>
                <FieldLabel htmlFor="pipeline" $w={106}>Pipeline Factor:</FieldLabel>
                <Select id="pipeline" value="0" />
              </Row>
              <div>
                <Group $pad="13px 11px 12px" $gap={7}>
                  <legend>Storage qualifier:</legend>
                  <Row $gap={6}>
                    <FieldLabel htmlFor="type" $w={73}>Type:</FieldLabel>
                    <Select id="type" value="Continuous" pad={27} icon={<ContinuousIcon />} />
                  </Row>
                </Group>
              </div>
            </Group>
          </ConfigGroupGap>
        </ConfigBody>
        <VScroll>
          <GlyphButton aria-label="Scroll up"><Chevron dir="up" /></GlyphButton>
          <span />
          <GlyphButton aria-label="Scroll down"><Chevron dir="down" /></GlyphButton>
        </VScroll>
      </ConfigScroll>
      <RedFrame $x={2} $y={38} $w={533} $h={35} />
      <Callout x={173} y={32} n={1} text="选择clk" />
      <Callout x={191} y={101} n={5} text="设置数据长度 4k" />
    </ConfigDock>
  );
}

export default function App() {
  return (
    <Frame>
      <GlobalStyle />
      <Heading>
        <TitleBar>
          <TapIcon />
          <WindowTitle>Signal Tap Logic Analyzer - H:/FPGA project/shiyan/8/ROM_test/rom_test - rom_test - [stp1.stp]*</WindowTitle>
          <CaptionButtons>
            <GlyphButton aria-label="Minimize"><svg width="12" height="12" viewBox="0 0 12 12"><path d="M0 5.500h12" stroke="#888" /></svg></GlyphButton>
            <GlyphButton aria-label="Maximize"><svg width="12" height="12" viewBox="0 0 12 12"><path d="M.5.5h11v11H.5z" fill="none" stroke="#888" /></svg></GlyphButton>
            <GlyphButton aria-label="Close window"><svg width="12" height="12" viewBox="0 0 12 12"><path d="M0 0l12 12M12 0L0 12" stroke="#888" /></svg></GlyphButton>
          </CaptionButtons>
        </TitleBar>
        <MenuRow>
          <Menu>
            {menuItems.map((m) => {
              const at = m === "Processing" ? 1 : 0;
              return <a href="#menu" key={m}>{m.slice(0, at)}<u>{m[at]}</u>{m.slice(at + 1)}</a>;
            })}
          </Menu>
          <SearchBox>
            <TextField $w={154} aria-label="Search" placeholder="Search altera.com" />
            <GlobeIcon />
          </SearchBox>
        </MenuRow>
      </Heading>
      <Toolbar>
        <Grip />
        <Tool aria-label="Open view"><OpenViewIcon /></Tool>
        <Divider />
        <Tool aria-label="Save"><SaveIcon /></Tool>
        <Divider />
        <Tool aria-label="Undo"><UndoIcon /></Tool>
        <Tool aria-label="Redo"><UndoIcon redo /></Tool>
        <Divider />
        <Tool aria-label="Waveforms"><WavesIcon /></Tool>
        <Tool aria-label="Find"><BinocularIcon /></Tool>
        <Divider />
        <Tool aria-label="Run"><PlayIcon /></Tool>
        <Tool aria-label="Autorun"><RecycleIcon /></Tool>
        <Divider />
        <Tool aria-label="Help"><HelpBadge>?</HelpBadge></Tool>
      </Toolbar>

      <UpperDocks>
        <InstanceDock>
          <PanelHeader $tall>
            <HeaderLabel $gap={1}>Instance Manager:</HeaderLabel>
            <MiniGroup>
              {miniIcons.map((icon, i) => <MiniButton key={i} aria-label={`Instance action ${i + 1}`}>{icon}</MiniButton>)}
            </MiniGroup>
            <Message $fill="#ffff00">Invalid JTAG configuration</Message>
            <InstanceClose><CloseGlyph /></InstanceClose>
          </PanelHeader>
          <InstanceTable>
            <colgroup>{instanceColumns.map(([n, w]) => <col key={n} width={w} />)}</colgroup>
            <thead><tr>{instanceColumns.map(([n]) => <th key={n}>{n}</th>)}</tr></thead>
            <tbody>
              <tr>
                <td><InstanceCell><InstanceIcon />auto_signaltap_0</InstanceCell></td>
                <td>Not running</td>
              </tr>
            </tbody>
          </InstanceTable>
        </InstanceDock>
        <JtagDock>
          <PanelHeader $tall>
            <HeaderLabel $gap={6}>JTAG Chain Configuration:</HeaderLabel>
            <Message $fill="#ff0000" $w={174}>No devices detected</Message>
            <JtagClose><CloseGlyph /></JtagClose>
          </PanelHeader>
          <JtagBody>
            <Row $gap={7}>
              <FieldLabel htmlFor="hardware" $w={69}>Hardware:</FieldLabel>
              <Select id="hardware" value="" disabled />
              <Button>Setup...</Button>
            </Row>
            <Row $gap={7}>
              <FieldLabel htmlFor="device" $w={69}>Device:</FieldLabel>
              <Select id="device" value="None Detected" disabled />
              <Button>Scan Chain</Button>
            </Row>
            <Row $gap={7}>
              <Button $w={28}>&gt;&gt;</Button>
              <FieldLabel htmlFor="sof" $w={95}>SOF Manager:</FieldLabel>
              <MiniGroup>
                <MiniButton aria-label="Program device">
                  <svg {...miniSvg}><path d="M9.500 0v7" stroke="#999" strokeWidth="3" strokeDasharray="1.500 1" /><path d="M5 6h9l-4.500 5z" fill="#999" /><path d="M3 11h13l2 3H1z" fill="#999" /><path d="M1 15.500h18" stroke="#888" strokeDasharray="1 1.500" /></svg>
                </MiniButton>
                <MiniButton aria-label="Attach file">
                  <svg {...miniSvg}><path d="M7 5v8a2.500 2.500 0 0 0 5 0V4a2 2 0 0 0-4 0v8a1 1 0 0 0 2 0V5" fill="none" stroke="#888" strokeWidth="1.200" /></svg>
                </MiniButton>
              </MiniGroup>
              <SofPath>
                <TextField id="sof" $grow disabled />
                <Button $w={28}>...</Button>
              </SofPath>
            </Row>
          </JtagBody>
        </JtagDock>
      </UpperDocks>

      <Workspace>
        <SetupPane>
          <Editor>
            <EditorTitle>auto_signaltap_0</EditorTitle>
            <NodeTable>
              <colgroup><col width="34" /><col width="34" /><col /></colgroup>
              <thead>
                <tr><th colSpan={3}>Node</th></tr>
                <tr><th>Type</th><th>Alias</th><th>Name</th></tr>
              </thead>
            </NodeTable>
            <Hint>Double-click to add nodes</Hint>
          </Editor>
          <SignalConfiguration />
        </SetupPane>
        <PaneTabs>
          <PaneTab><HammerIcon />Data</PaneTab>
          <PaneTab $active><GogglesIcon />Setup</PaneTab>
        </PaneTabs>
        <LowerDocks>
          <LowerDock>
            <PanelHeader $white><PanelTitle>Hierarchy Display:</PanelTitle><CloseGlyph /></PanelHeader>
          </LowerDock>
          <LowerDock>
            <PanelHeader $white><PanelTitle /><CloseGlyph /></PanelHeader>
          </LowerDock>
        </LowerDocks>
      </Workspace>
      <FileTabs><FileTab><InstanceIcon />auto_signaltap_0</FileTab></FileTabs>
      <StatusBar>
        <StatusCells><span>0%</span><span>00:00:00</span></StatusCells>
        <StatusGrip><SizeGrip /></StatusGrip>
      </StatusBar>
      <NodeFinder />
      <Watermark>https://blog.csdn.net/qq_44852369</Watermark>
    </Frame>
  );
}
